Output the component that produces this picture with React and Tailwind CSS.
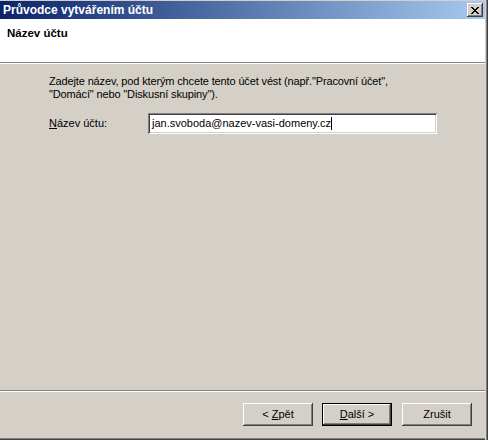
import React from 'react';

const raised =
  'shadow-[inset_-1px_-1px_#404040,inset_1px_1px_#ffffff,inset_-2px_-2px_#808080,inset_2px_2px_#d4d0c8]';

const WizButton = ({ children, isDefault }) => (
  <button
    className={
      isDefault
        ? 'w-[70px] h-[23px] bg-[#d4d0c8] text-black border border-black flex items-center justify-center shadow-[inset_-1px_-1px_#404040,inset_1px_1px_#ffffff,inset_-2px_-2px_#808080]'
        : `w-[70px] h-[23px] bg-[#d4d0c8] text-black flex items-center justify-center ${raised}`
    }
  >
    {children}
  </button>
);

export default function App() {
  return (
    <div
      className="w-[488px] h-[440px] bg-[#d4d0c8] flex text-[11px] leading-[13px] text-black"
      style={{ fontFamily: '"Liberation Sans", Arial, sans-serif' }}
    >
      <div className="w-[485px] h-full flex flex-col">
        {/* title bar */}
        <div className="h-px bg-[#d4d0c8]" />
        <div className="h-[18px] flex items-center justify-between pl-[3px] pr-[2px] bg-linear-to-r/srgb from-[#0a246a] to-[#a6caf0]">
          <span className="font-bold text-white text-[12px]">Průvodce vytvářením účtu</span>
          <div className={`w-[16px] h-[14px] bg-[#d4d0c8] flex items-center justify-center ${raised}`}>
            <svg width="8" height="7" viewBox="0 0 8 7" shapeRendering="crispEdges">
              <path d="M0 0h2v1H0zM6 0h2v1H6zM1 1h2v1H1zM5 1h2v1H5zM2 2h4v1H2zM3 3h2v1H3zM2 4h4v1H2zM1 5h2v1H1zM5 5h2v1H5zM0 6h2v1H0zM6 6h2v1H6z" fill="#000" />
            </svg>
          </div>
        </div>

        {/* header */}
        <div className="h-[43px] bg-white pl-[7px] pt-[8px]">
          <span className="font-bold text-[11.5px]">Název účtu</span>
        </div>
        <div className="h-px bg-[#808080]" />
        <div className="h-px bg-white" />

        {/* body */}
        <div className="flex-1 pl-[49px] pt-[11px]">
          <p className="tracking-[-0.14px]">
            Zadejte název, pod kterým chcete tento účet vést (např."Pracovní účet",
            <br />
            "Domácí" nebo "Diskusní skupiny").
          </p>
          <div className="flex items-center mt-[12px]">
            <span className="w-[99px]">
              <span className="underline">N</span>ázev účtu:
            </span>
            <div className="w-[289px] h-[21px] bg-white flex items-center pl-[4px] shadow-[inset_1px_1px_#808080,inset_-1px_-1px_#ffffff,inset_2px_2px_#404040,inset_-2px_-2px_#d4d0c8]">
              <span>jan.svoboda@nazev-vasi-domeny.cz</span>
              <span className="w-px h-[13px] bg-black" />
            </div>
          </div>
        </div>

        {/* footer */}
        <div className="h-px bg-[#808080]" />
        <div className="h-px bg-white" />
        <div className="h-[46px] flex items-start pt-[11px] pl-[243px] gap-[9px]">
          <WizButton>
            &lt;&nbsp;<span className="underline">Z</span>pět
          </WizButton>
          <WizButton isDefault>
            <span className="underline">D</span>alší&nbsp;&gt;
          </WizButton>
          <div className="ml-px">
            <WizButton>Zrušit</WizButton>
          </div>
        </div>
        <div className="h-px bg-[#808080]" />
        <div className="h-px bg-[#404040]" />
      </div>
      <div className="w-px bg-[#d4d0c8]" />
      <div className="w-px bg-[#808080]" />
      <div className="w-px bg-[#404040]" />
    </div>
  );
}
